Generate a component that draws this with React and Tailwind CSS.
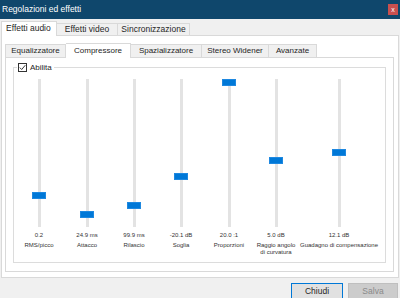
import React from "react";

const sliders = [
  { w: 50, top: 113, value: "0.2", label: ["RMS/picco"] },
  { w: 46, top: 132, value: "24.9 ms", label: ["Attacco"] },
  { w: 48, top: 123, value: "99.9 ms", label: ["Rilascio"] },
  { w: 46, top: 94, value: "-20.1 dB", label: ["Soglia"] },
  { w: 50, top: 0, value: "20.0 :1", label: ["Proporzioni"] },
  { w: 44, top: 78, value: "5.0 dB", label: ["Raggio angolo", "di curvatura"] },
  { w: 82, top: 70, value: "12.1 dB", label: ["Guadagno di compensazione"] },
];

function Slider({ s }) {
  return (
    <div className="flex flex-col items-center shrink-0" style={{ width: s.w }}>
      <div className="relative w-[14px] h-[148px] flex justify-center">
        <div className="w-[3px] h-full bg-[#e3e3e3]" />
        <div
          className="absolute left-0 w-[14px] h-[7px] bg-[#0078d7] border border-[#1e88e0]"
          style={{ top: s.top }}
        />
      </div>
      <div className="mt-[4px] text-[6px] leading-[8px] text-[#333] whitespace-nowrap">{s.value}</div>
      <div className="mt-[3px] text-[6px] leading-[7px] text-[#333] text-center whitespace-nowrap">
        {s.label.map((l, i) => (
          <div key={i}>{l}</div>
        ))}
      </div>
    </div>
  );
}

export default function App() {
  return (
    <div className="w-[400px] h-[298px] bg-[#f0f0f0] flex flex-col overflow-hidden font-['Liberation_Sans',Arial,sans-serif] text-[#262626]">
      {/* Title bar */}
      <div className="h-[19px] bg-[#0f476c] flex items-center justify-between pl-[2px] pr-[2px] shrink-0">
        <span className="text-white text-[8.5px] leading-none">Regolazioni ed effetti</span>
        <div className="w-[10px] h-[11px] bg-[#c8504f] flex items-center justify-center text-white text-[7px] leading-none">
          x
        </div>
      </div>

      {/* Outer tabs */}
      <div className="h-[16px] flex items-end pl-[1px] shrink-0 relative z-10">
        <div className="w-[56px] h-[15px] bg-white border border-b-0 border-[#d9d9d9] text-[8.5px] flex items-center pl-[4px] -mb-px pb-px">
          Effetti audio
        </div>
        <div className="w-[61px] h-[12px] bg-[#f0f0f0] border border-l-0 border-b-0 border-[#d9d9d9] text-[8.5px] flex items-center justify-center">
          Effetti video
        </div>
        <div className="w-[72px] h-[12px] bg-[#f0f0f0] border border-l-0 border-b-0 border-[#d9d9d9] text-[8.5px] flex items-center justify-center">
          Sincronizzazione
        </div>
      </div>

      {/* Outer panel */}
      <div className="ml-[1px] w-[398px] h-[243px] bg-white border border-[#d9d9d9] shrink-0 flex flex-col pl-[2px] pt-[6px]">
        {/* Inner tabs */}
        <div className="h-[15px] flex items-end pl-[1px] relative z-10 shrink-0">
          <div className="w-[61px] h-[13px] bg-[#f0f0f0] border border-b-0 border-[#d9d9d9] text-[8px] flex items-center justify-center">
            Equalizzatore
          </div>
          <div className="w-[65px] h-[15px] bg-white border border-l-0 border-b-0 border-[#d9d9d9] text-[8px] flex items-center justify-center -mb-px pb-px">
            Compressore
          </div>
          <div className="w-[71px] h-[13px] bg-[#f0f0f0] border border-l-0 border-b-0 border-[#d9d9d9] text-[8px] flex items-center justify-center">
            Spazializzatore
          </div>
          <div className="w-[67px] h-[13px] bg-[#f0f0f0] border border-l-0 border-b-0 border-[#d9d9d9] text-[8px] flex items-center justify-center">
            Stereo Widener
          </div>
          <div className="w-[48px] h-[13px] bg-[#f0f0f0] border border-l-0 border-b-0 border-[#d9d9d9] text-[8px] flex items-center justify-center">
            Avanzate
          </div>
        </div>

        {/* Inner panel */}
        <div className="ml-[1px] w-[389px] h-[215px] bg-white border border-[#d9d9d9] shrink-0 pl-[7px] pt-[9px]">
          {/* Group box */}
          <div className="relative w-[373px] h-[196px] border border-[#dcdcdc]">
            <div className="absolute left-[3px] -top-[5px] bg-white flex items-center gap-[3px] pr-[2px] pl-px">
              <div className="w-[9px] h-[9px] border border-[#333] bg-white flex items-center justify-center">
                <svg width="7" height="7" viewBox="0 0 7 7">
                  <path d="M0.8 3.6 L2.7 5.5 L6.3 1.2" fill="none" stroke="#222" strokeWidth="0.9" />
                </svg>
              </div>
              <span className="text-[8px] leading-none">Abilita</span>
            </div>
            <div className="flex pt-[11px]">
              {sliders.map((s, i) => (
                <Slider key={i} s={s} />
              ))}
            </div>
          </div>
        </div>
      </div>

      {/* Bottom buttons */}
      <div className="flex justify-end gap-[5px] pr-[2px] pt-[5px]">
        <div className="w-[52px] h-[17px] bg-[#e1e1e1] border border-[#0078d7] text-[8.5px] flex items-center justify-center">
          Chiudi
        </div>
        <div className="w-[50px] h-[17px] bg-[#cccccc] border border-[#bfbfbf] text-[8.5px] text-[#8a8a8a] flex items-center justify-center">
          Salva
        </div>
      </div>
    </div>
  );
}
